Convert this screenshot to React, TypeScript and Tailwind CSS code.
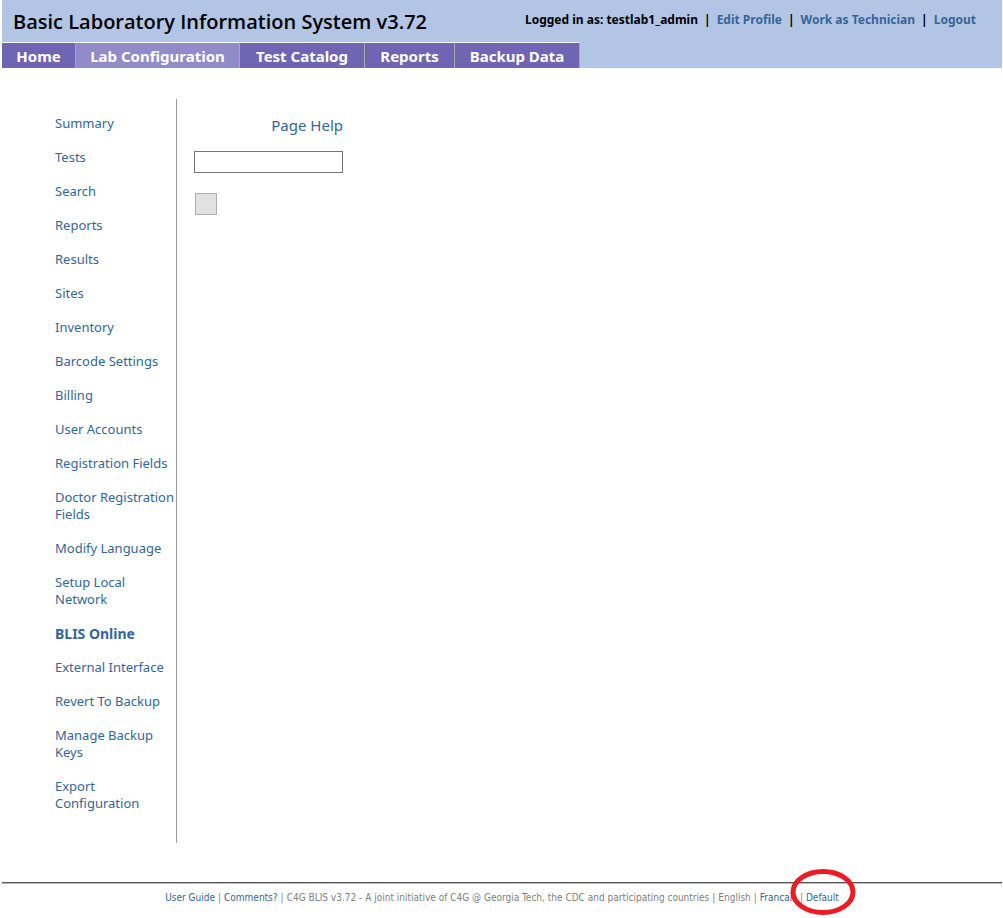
import React from "react";

const tabs = [
  { label: "Home", size: "w-[74px]" },
  { label: "Lab Configuration", size: "w-[164px]" },
  { label: "Test Catalog", size: "w-[125px]" },
  { label: "Reports", size: "w-[90px]" },
  { label: "Backup Data", size: "w-[125px]" },
];

const sections = [
  "Summary",
  "Tests",
  "Search",
  "Reports",
  "Results",
  "Sites",
  "Inventory",
  "Barcode Settings",
  "Billing",
  "User Accounts",
  "Registration Fields",
  "Doctor Registration Fields",
  "Modify Language",
  "Setup Local Network",
  "BLIS Online",
  "External Interface",
  "Revert To Backup",
  "Manage Backup Keys",
  "Export Configuration",
];

function Header() {
  return (
    <header className="mr-px ml-0.5 bg-[#b3c5e5]">
      <div className="flex h-[42px] items-start justify-between pr-[26px] pl-[11px]">
        <h1 className="pt-2 font-['Trebuchet_MS','Open_Sans',sans-serif] text-[20px] leading-7 font-semibold whitespace-nowrap text-black">
          Basic Laboratory Information System v3.72
        </h1>
        <div className="flex gap-1.5 pt-3 text-[12px] leading-4 font-bold whitespace-nowrap text-black">
          <span>Logged in as: testlab1_admin</span>
          <span>|</span>
          <a href="#profile" className="text-[#336699]">Edit Profile</a>
          <span>|</span>
          <a href="#technician" className="text-[#336699]">Work as Technician</a>
          <span>|</span>
          <a href="#logout" className="text-[#336699]">Logout</a>
        </div>
      </div>
      <nav className="flex">
        {tabs.map((tab) => (
          <a
            key={tab.label}
            href="#tab"
            className={`${tab.size} ${
              tab.label === "Lab Configuration" ? "bg-[#918bc7]" : "bg-[#6f65b2]"
            } h-[26px] border-t border-r border-t-white border-r-[#aaaaaa] pt-px text-center text-[15px] leading-6 font-bold whitespace-nowrap text-white`}
          >
            {tab.label}
          </a>
        ))}
      </nav>
    </header>
  );
}

function Sidebar() {
  return (
    <nav className="w-[177px] shrink-0 border-r border-[#999999] pt-4 pb-[31px] pl-[55px]">
      <ul className="flex flex-col gap-[17px]">
        {sections.map((name) => (
          <li key={name} className="leading-[17px]">
            <a
              href="#section"
              className={
                name === "BLIS Online"
                  ? "block text-[14px] font-bold text-[#336699]"
                  : "block text-[13px] text-[#336699]"
              }
            >
              {name}
            </a>
          </li>
        ))}
      </ul>
    </nav>
  );
}

function Footer() {
  return (
    <footer className="mr-px ml-0.5">
      <div className="border-t border-b border-t-[#555555] border-b-[#bbbbbb]" />
      <div className="flex justify-center gap-[3px] pt-1.5 font-['Tahoma','DejaVu_Sans_Condensed','DejaVu_Sans',sans-serif] text-[10px] leading-4 whitespace-nowrap text-[#808080]">
        <a href="#guide" className="text-[#336699]">User Guide</a>
        <span>|</span>
        <a href="#comments" className="text-[#336699]">Comments?</a>
        <span>|</span>
        <span>C4G BLIS v3.72 - A joint initiative of C4G @ Georgia Tech, the CDC and participating countries</span>
        <span>|</span>
        <span>English</span>
        <span>|</span>
        <a href="#fr" className="text-[#336699]">Francais</a>
        <span>|</span>
        <span className="relative">
          <a href="#default" className="text-[#336699]">Default</a>
          <svg
            className="pointer-events-none absolute -top-[22px] -left-4 h-[48px] w-[66px]"
            viewBox="0 0 66 48"
            fill="none"
            aria-hidden="true"
          >
            <ellipse cx="33" cy="24" rx="30" ry="20.5" stroke="#ed1c24" strokeWidth="5" />
          </svg>
        </span>
      </div>
    </footer>
  );
}

export default function App() {
  return (
    <div className="min-h-screen bg-white font-['Tahoma','Noto_Sans',sans-serif]">
      <Header />
      <div className="flex pt-[31px] pb-[39px]">
        <Sidebar />
        <main className="flex flex-col items-start pt-4 pl-[17px]">
          <a href="#help" className="self-end text-[15px] leading-5 text-[#336699]">Page Help</a>
          <input
            type="text"
            aria-label="Value"
            className="mt-4 h-[22px] w-[149px] border border-[#767676] bg-white px-1 text-[13px] text-black"
          />
          <button
            type="button"
            aria-label="Submit"
            className="mt-5 ml-px size-[22px] border border-[#adadad] bg-[#e1e1e1]"
          />
        </main>
      </div>
      <Footer />
    </div>
  );
}
